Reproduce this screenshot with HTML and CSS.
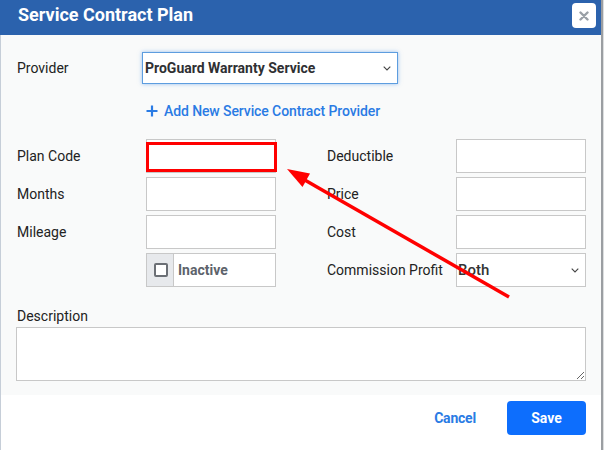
FILE: index.html
```html
<!DOCTYPE html>
<html>
<head>
<meta charset="utf-8">
<link rel="stylesheet" href="styles.css">
</head>
<body>
<div class="modal">
  <div class="header">
    <div class="title">Service Contract Plan</div>
    <button class="close" aria-label="Close">
      <svg width="10" height="10" viewBox="0 0 10 10"><path d="M1.5 1.5 L8.5 8.5 M8.5 1.5 L1.5 8.5" stroke="#9aa0a6" stroke-width="2.4" stroke-linecap="round"/></svg>
    </button>
  </div>
  <div class="content">
    <div class="provider-row">
      <label class="label provider-label">Provider</label>
      <div class="select-wrap provider-select">
        <select class="select bold"><option>ProGuard Warranty Service</option></select>
        <svg class="chev" width="8" height="5" viewBox="0 0 8 5"><path d="M0.7 0.7 L4 4 L7.3 0.7" fill="none" stroke="#444" stroke-width="1.1"/></svg>
      </div>
    </div>
    <div class="add-row">
      <a class="add-link">
        <svg width="12" height="12" viewBox="0 0 12 12"><path d="M6 0.5 V11.5 M0.5 6 H11.5" stroke="#2a7be4" stroke-width="2.2"/></svg>
        <span>Add New Service Contract Provider</span>
      </a>
    </div>
    <div class="grid">
      <label class="label">Plan Code</label>
      <input class="input" type="text">
      <label class="label right">Deductible</label>
      <input class="input" type="text">

      <label class="label">Months</label>
      <input class="input" type="text">
      <label class="label right">Price</label>
      <input class="input" type="text">

      <label class="label">Mileage</label>
      <input class="input" type="text">
      <label class="label right">Cost</label>
      <input class="input" type="text">

      <div></div>
      <div class="check-group">
        <div class="addon"><span class="box"></span></div>
        <div class="check-text">Inactive</div>
      </div>
      <label class="label right">Commission Profit</label>
      <div class="select-wrap">
        <select class="select both"><option>Both</option></select>
        <svg class="chev" width="8" height="5" viewBox="0 0 8 5"><path d="M0.7 0.7 L4 4 L7.3 0.7" fill="none" stroke="#444" stroke-width="1.1"/></svg>
      </div>
    </div>
    <label class="label desc-label">Description</label>
    <textarea class="textarea"></textarea>
  </div>
  <div class="footer">
    <a class="cancel">Cancel</a>
    <button class="save">Save</button>
  </div>
</div>
<svg class="annot" width="604" height="450" viewBox="0 0 604 450">
  <rect x="147.5" y="143.5" width="128" height="27" fill="none" stroke="#ff0000" stroke-width="3"/>
  <line x1="509" y1="297" x2="303" y2="179" stroke="#ff0000" stroke-width="3.5"/>
  <polygon points="287,169 310,173.5 302.5,187" fill="#ff0000"/>
</svg>
</body>
</html>
```

FILE: styles.css
```css
* { box-sizing: border-box; }
html, body { margin: 0; padding: 0; }
body {
  background: #dcdedf;
  font-family: Roboto, "Noto Sans", "Liberation Sans", sans-serif;
  width: 604px;
  height: 450px;
  overflow: hidden;
  position: relative;
}
.modal {
  width: 603px;
  height: 450px;
  display: flex;
  flex-direction: column;
  border-right: 2px solid #9b9ea2;
  background: #fff;
}
.header {
  height: 35px;
  flex: none;
  background: #2b62ad;
  display: flex;
  justify-content: space-between;
  align-items: flex-start;
  padding-left: 18px;
  padding-right: 5px;
}
.title {
  color: #fff;
  font-size: 18px;
  font-weight: 700;
  line-height: 20px;
  margin-top: 5px;
}
.close {
  width: 24px;
  height: 25px;
  margin-top: 3px;
  border: 0;
  border-radius: 4px;
  background: #fff;
  padding: 0;
  display: flex;
  align-items: center;
  justify-content: center;
}
.content {
  background: #f9fafa;
  border-left: 1px solid #c6ced8;
  padding: 17px 15px 14px 15px;
  flex: none;
}
.label {
  font-size: 14px;
  color: #222;
  line-height: 16px;
  padding-left: 1px;
  display: flex;
  align-items: center;
}
.provider-row {
  display: flex;
  align-items: center;
  height: 32px;
}
.provider-label { width: 126px; }
.select-wrap {
  position: relative;
  height: 34px;
}
.provider-select {
  width: 256px;
  height: 32px;
}
.select {
  -webkit-appearance: none;
  appearance: none;
  width: 100%;
  height: 100%;
  border: 1px solid #c8c8c8;
  background: #fff;
  font-family: inherit;
  font-size: 14px;
  color: #2a2a2a;
  padding: 0 0 0 2px;
  border-radius: 0;
  margin: 0;
}
.select.bold {
  font-weight: 700;
  color: #2f3033;
  border-color: #5d9ddf;
  box-shadow: 0 0 4px rgba(70, 140, 225, 0.55);
}
.select.both {
  font-size: 15px;
  font-weight: 500;
  color: #333;
  padding-left: 1px;
}
.chev {
  position: absolute;
  right: 7px;
  top: 50%;
  margin-top: -2px;
}
.add-row {
  padding-left: 130px;
  margin-top: 17px;
  height: 20px;
  display: flex;
  align-items: center;
}
.add-link {
  display: flex;
  align-items: center;
  gap: 6px;
  color: #2a7be4;
  font-size: 14px;
  font-weight: 500;
  letter-spacing: -0.1px;
}
.grid {
  margin-top: 18px;
  display: grid;
  grid-template-columns: 130px 130px 180px 130px;
  grid-auto-rows: 34px;
  row-gap: 4px;
}
.label.right { padding-left: 51px; }
.input {
  width: 130px;
  height: 34px;
  border: 1px solid #c8c8c8;
  background: #fff;
  margin: 0;
  border-radius: 0;
  padding: 0 4px;
  font-family: inherit;
}
.check-group {
  display: flex;
  border: 1px solid #c8c8c8;
  background: #fff;
  height: 34px;
}
.addon {
  width: 27px;
  background: #e7e9ec;
  border-right: 1px solid #c8c8c8;
  display: flex;
  align-items: center;
  justify-content: center;
}
.box {
  width: 14px;
  height: 14px;
  border: 2px solid #6b6f75;
  border-radius: 2px;
  background: #fff;
  margin-left: 1px;
}
.check-text {
  display: flex;
  align-items: center;
  padding-left: 4px;
  font-size: 14px;
  font-weight: 700;
  color: #5d636b;
}
.desc-label {
  margin-top: 21px;
}
.textarea {
  display: block;
  margin-top: 3px;
  width: 570px;
  height: 54px;
  border: 1px solid #c8c8c8;
  background: #fff;
  resize: vertical;
  font-family: inherit;
}
.footer {
  flex: 1;
  background: #fff;
  border-left: 1px solid #c6ced8;
  display: flex;
  justify-content: flex-end;
  align-items: flex-start;
  padding: 6px 15px 0 0;
}
.cancel {
  color: #2a7be4;
  font-size: 14px;
  font-weight: 700;
  margin-top: 9px;
  margin-right: 31px;
  letter-spacing: -0.2px;
}
.save {
  width: 79px;
  height: 34px;
  border: 0;
  border-radius: 4px;
  background: #0d6efd;
  color: #fff;
  font-family: inherit;
  font-size: 14px;
  font-weight: 700;
}
.annot {
  position: absolute;
  left: 0;
  top: 0;
  pointer-events: none;
}
```
